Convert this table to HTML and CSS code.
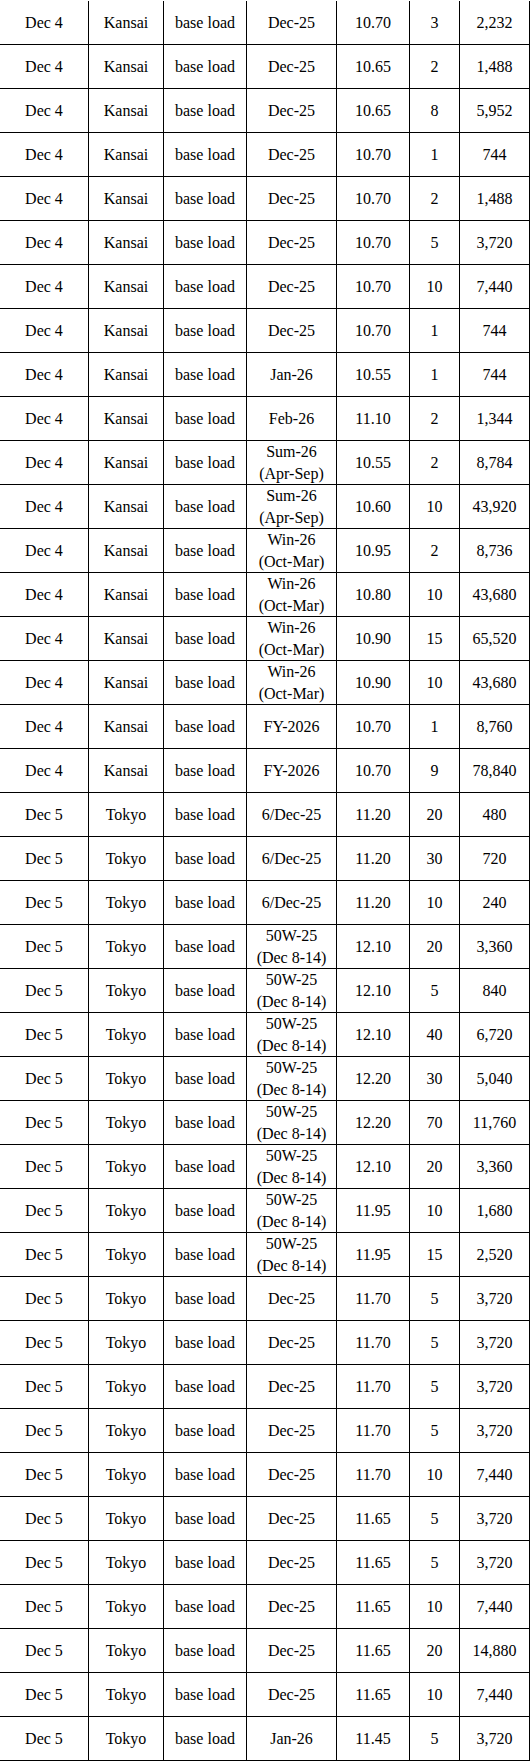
FILE: index.html
```html
<!DOCTYPE html>
<html>
<head>
<meta charset="utf-8">
<link rel="stylesheet" href="styles.css">
</head>
<body>
<div class="sheet">
<div class="row"><div class="cell">Dec 4</div><div class="cell">Kansai</div><div class="cell">base load</div><div class="cell">Dec-25</div><div class="cell">10.70</div><div class="cell">3</div><div class="cell">2,232</div></div>
<div class="row"><div class="cell">Dec 4</div><div class="cell">Kansai</div><div class="cell">base load</div><div class="cell">Dec-25</div><div class="cell">10.65</div><div class="cell">2</div><div class="cell">1,488</div></div>
<div class="row"><div class="cell">Dec 4</div><div class="cell">Kansai</div><div class="cell">base load</div><div class="cell">Dec-25</div><div class="cell">10.65</div><div class="cell">8</div><div class="cell">5,952</div></div>
<div class="row"><div class="cell">Dec 4</div><div class="cell">Kansai</div><div class="cell">base load</div><div class="cell">Dec-25</div><div class="cell">10.70</div><div class="cell">1</div><div class="cell">744</div></div>
<div class="row"><div class="cell">Dec 4</div><div class="cell">Kansai</div><div class="cell">base load</div><div class="cell">Dec-25</div><div class="cell">10.70</div><div class="cell">2</div><div class="cell">1,488</div></div>
<div class="row"><div class="cell">Dec 4</div><div class="cell">Kansai</div><div class="cell">base load</div><div class="cell">Dec-25</div><div class="cell">10.70</div><div class="cell">5</div><div class="cell">3,720</div></div>
<div class="row"><div class="cell">Dec 4</div><div class="cell">Kansai</div><div class="cell">base load</div><div class="cell">Dec-25</div><div class="cell">10.70</div><div class="cell">10</div><div class="cell">7,440</div></div>
<div class="row"><div class="cell">Dec 4</div><div class="cell">Kansai</div><div class="cell">base load</div><div class="cell">Dec-25</div><div class="cell">10.70</div><div class="cell">1</div><div class="cell">744</div></div>
<div class="row"><div class="cell">Dec 4</div><div class="cell">Kansai</div><div class="cell">base load</div><div class="cell">Jan-26</div><div class="cell">10.55</div><div class="cell">1</div><div class="cell">744</div></div>
<div class="row"><div class="cell">Dec 4</div><div class="cell">Kansai</div><div class="cell">base load</div><div class="cell">Feb-26</div><div class="cell">11.10</div><div class="cell">2</div><div class="cell">1,344</div></div>
<div class="row"><div class="cell">Dec 4</div><div class="cell">Kansai</div><div class="cell">base load</div><div class="cell">Sum-26<br>(Apr-Sep)</div><div class="cell">10.55</div><div class="cell">2</div><div class="cell">8,784</div></div>
<div class="row"><div class="cell">Dec 4</div><div class="cell">Kansai</div><div class="cell">base load</div><div class="cell">Sum-26<br>(Apr-Sep)</div><div class="cell">10.60</div><div class="cell">10</div><div class="cell">43,920</div></div>
<div class="row"><div class="cell">Dec 4</div><div class="cell">Kansai</div><div class="cell">base load</div><div class="cell">Win-26<br>(Oct-Mar)</div><div class="cell">10.95</div><div class="cell">2</div><div class="cell">8,736</div></div>
<div class="row"><div class="cell">Dec 4</div><div class="cell">Kansai</div><div class="cell">base load</div><div class="cell">Win-26<br>(Oct-Mar)</div><div class="cell">10.80</div><div class="cell">10</div><div class="cell">43,680</div></div>
<div class="row"><div class="cell">Dec 4</div><div class="cell">Kansai</div><div class="cell">base load</div><div class="cell">Win-26<br>(Oct-Mar)</div><div class="cell">10.90</div><div class="cell">15</div><div class="cell">65,520</div></div>
<div class="row"><div class="cell">Dec 4</div><div class="cell">Kansai</div><div class="cell">base load</div><div class="cell">Win-26<br>(Oct-Mar)</div><div class="cell">10.90</div><div class="cell">10</div><div class="cell">43,680</div></div>
<div class="row"><div class="cell">Dec 4</div><div class="cell">Kansai</div><div class="cell">base load</div><div class="cell">FY-2026</div><div class="cell">10.70</div><div class="cell">1</div><div class="cell">8,760</div></div>
<div class="row"><div class="cell">Dec 4</div><div class="cell">Kansai</div><div class="cell">base load</div><div class="cell">FY-2026</div><div class="cell">10.70</div><div class="cell">9</div><div class="cell">78,840</div></div>
<div class="row"><div class="cell">Dec 5</div><div class="cell">Tokyo</div><div class="cell">base load</div><div class="cell">6/Dec-25</div><div class="cell">11.20</div><div class="cell">20</div><div class="cell">480</div></div>
<div class="row"><div class="cell">Dec 5</div><div class="cell">Tokyo</div><div class="cell">base load</div><div class="cell">6/Dec-25</div><div class="cell">11.20</div><div class="cell">30</div><div class="cell">720</div></div>
<div class="row"><div class="cell">Dec 5</div><div class="cell">Tokyo</div><div class="cell">base load</div><div class="cell">6/Dec-25</div><div class="cell">11.20</div><div class="cell">10</div><div class="cell">240</div></div>
<div class="row"><div class="cell">Dec 5</div><div class="cell">Tokyo</div><div class="cell">base load</div><div class="cell">50W-25<br>(Dec 8-14)</div><div class="cell">12.10</div><div class="cell">20</div><div class="cell">3,360</div></div>
<div class="row"><div class="cell">Dec 5</div><div class="cell">Tokyo</div><div class="cell">base load</div><div class="cell">50W-25<br>(Dec 8-14)</div><div class="cell">12.10</div><div class="cell">5</div><div class="cell">840</div></div>
<div class="row"><div class="cell">Dec 5</div><div class="cell">Tokyo</div><div class="cell">base load</div><div class="cell">50W-25<br>(Dec 8-14)</div><div class="cell">12.10</div><div class="cell">40</div><div class="cell">6,720</div></div>
<div class="row"><div class="cell">Dec 5</div><div class="cell">Tokyo</div><div class="cell">base load</div><div class="cell">50W-25<br>(Dec 8-14)</div><div class="cell">12.20</div><div class="cell">30</div><div class="cell">5,040</div></div>
<div class="row"><div class="cell">Dec 5</div><div class="cell">Tokyo</div><div class="cell">base load</div><div class="cell">50W-25<br>(Dec 8-14)</div><div class="cell">12.20</div><div class="cell">70</div><div class="cell">11,760</div></div>
<div class="row"><div class="cell">Dec 5</div><div class="cell">Tokyo</div><div class="cell">base load</div><div class="cell">50W-25<br>(Dec 8-14)</div><div class="cell">12.10</div><div class="cell">20</div><div class="cell">3,360</div></div>
<div class="row"><div class="cell">Dec 5</div><div class="cell">Tokyo</div><div class="cell">base load</div><div class="cell">50W-25<br>(Dec 8-14)</div><div class="cell">11.95</div><div class="cell">10</div><div class="cell">1,680</div></div>
<div class="row"><div class="cell">Dec 5</div><div class="cell">Tokyo</div><div class="cell">base load</div><div class="cell">50W-25<br>(Dec 8-14)</div><div class="cell">11.95</div><div class="cell">15</div><div class="cell">2,520</div></div>
<div class="row"><div class="cell">Dec 5</div><div class="cell">Tokyo</div><div class="cell">base load</div><div class="cell">Dec-25</div><div class="cell">11.70</div><div class="cell">5</div><div class="cell">3,720</div></div>
<div class="row"><div class="cell">Dec 5</div><div class="cell">Tokyo</div><div class="cell">base load</div><div class="cell">Dec-25</div><div class="cell">11.70</div><div class="cell">5</div><div class="cell">3,720</div></div>
<div class="row"><div class="cell">Dec 5</div><div class="cell">Tokyo</div><div class="cell">base load</div><div class="cell">Dec-25</div><div class="cell">11.70</div><div class="cell">5</div><div class="cell">3,720</div></div>
<div class="row"><div class="cell">Dec 5</div><div class="cell">Tokyo</div><div class="cell">base load</div><div class="cell">Dec-25</div><div class="cell">11.70</div><div class="cell">5</div><div class="cell">3,720</div></div>
<div class="row"><div class="cell">Dec 5</div><div class="cell">Tokyo</div><div class="cell">base load</div><div class="cell">Dec-25</div><div class="cell">11.70</div><div class="cell">10</div><div class="cell">7,440</div></div>
<div class="row"><div class="cell">Dec 5</div><div class="cell">Tokyo</div><div class="cell">base load</div><div class="cell">Dec-25</div><div class="cell">11.65</div><div class="cell">5</div><div class="cell">3,720</div></div>
<div class="row"><div class="cell">Dec 5</div><div class="cell">Tokyo</div><div class="cell">base load</div><div class="cell">Dec-25</div><div class="cell">11.65</div><div class="cell">5</div><div class="cell">3,720</div></div>
<div class="row"><div class="cell">Dec 5</div><div class="cell">Tokyo</div><div class="cell">base load</div><div class="cell">Dec-25</div><div class="cell">11.65</div><div class="cell">10</div><div class="cell">7,440</div></div>
<div class="row"><div class="cell">Dec 5</div><div class="cell">Tokyo</div><div class="cell">base load</div><div class="cell">Dec-25</div><div class="cell">11.65</div><div class="cell">20</div><div class="cell">14,880</div></div>
<div class="row"><div class="cell">Dec 5</div><div class="cell">Tokyo</div><div class="cell">base load</div><div class="cell">Dec-25</div><div class="cell">11.65</div><div class="cell">10</div><div class="cell">7,440</div></div>
<div class="row"><div class="cell">Dec 5</div><div class="cell">Tokyo</div><div class="cell">base load</div><div class="cell">Jan-26</div><div class="cell">11.45</div><div class="cell">5</div><div class="cell">3,720</div></div>
</div>
</body>
</html>
```

FILE: styles.css
```css
html, body {
  margin: 0;
  padding: 0;
  background: #ffffff;
}

.sheet {
  padding-top: 1px;
  width: 530px;
  font-family: "Liberation Serif", "Times New Roman", serif;
  font-size: 16px;
  line-height: 22px;
  color: #000000;
}

.row {
  display: grid;
  grid-template-columns: 89px 75px 83px 90px 73px 50px 70px;
  height: 44px;
}

.cell {
  box-sizing: border-box;
  height: 44px;
  border-right: 1px solid #000000;
  border-bottom: 1px solid #000000;
  display: flex;
  align-items: center;
  justify-content: center;
  text-align: center;
  white-space: nowrap;
  overflow: hidden;
}
```
